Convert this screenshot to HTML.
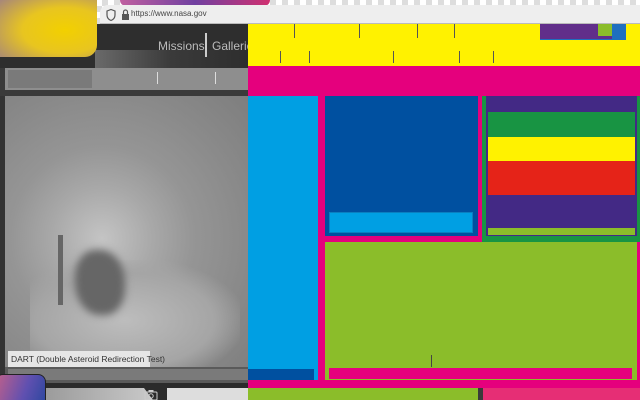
<!DOCTYPE html>
<html><head><meta charset="utf-8"><style>
*{margin:0;padding:0;box-sizing:border-box}
html,body{width:640px;height:400px;overflow:hidden}
body{position:relative;background:#3a3a3a;font-family:"Liberation Sans",sans-serif}
div{position:absolute}
.t{width:1px;background:#555}
</style></head><body>
<div style="left:0;top:0;width:640px;height:24px;background-color:#fff;background-image:linear-gradient(45deg,#ddd 25%,transparent 25%,transparent 75%,#ddd 75%),linear-gradient(45deg,#ddd 25%,transparent 25%,transparent 75%,#ddd 75%);background-size:12px 12px;background-position:0 0,6px 6px"></div>
<div style="left:120px;top:0;width:150px;height:6px;background:linear-gradient(90deg,#c060a0,#7040a0,#d03070);border-radius:0 0 8px 8px"></div>
<div style="left:100px;top:5px;width:540px;height:20px;background:#eee;border-radius:8px 0 0 0;border-bottom:2px solid #bbb"></div>
<svg style="position:absolute;left:104px;top:8px" width="30" height="14"><path d="M3 3 L7 1.5 L11 3 L11 7 Q11 11 7 12.5 Q3 11 3 7Z" fill="none" stroke="#555" stroke-width="1.2"/><rect x="18" y="6" width="7" height="6" fill="#555"/><path d="M19.5 6 V4 a2 2 0 0 1 4 0 V6" fill="none" stroke="#555" stroke-width="1.2"/></svg>
<div style="left:131px;top:9px;font-size:8px;color:#444">https://www.nasa.gov</div>
<div style="left:0;top:24px;width:248px;height:44px;background:#2e2e2e"></div>
<div style="left:95px;top:50px;width:153px;height:18px;background:linear-gradient(90deg,#6a6a6a,#3a3a3a 50%,#2e2e2e)"></div>
<div style="left:158px;top:39px;font-size:12px;color:#bbb">Missions</div>
<div style="left:205px;top:33px;width:2px;height:24px;background:#ccc"></div>
<div style="left:212px;top:39px;font-size:12px;color:#bbb">Galleries</div>
<div style="left:5px;top:68px;width:243px;height:22px;background:#8e8e8e"></div>
<div style="left:8px;top:70px;width:84px;height:18px;background:#7a7a7a"></div>
<div style="left:157px;top:72px;width:1px;height:12px;background:#ddd"></div>
<div style="left:215px;top:72px;width:1px;height:12px;background:#ddd"></div>
<div style="left:0;top:90px;width:248px;height:6px;background:#3a3a3a"></div>
<div style="left:-10px;top:-10px;width:107px;height:67px;border-radius:0 0 12px 0;background:radial-gradient(ellipse at 70% 60%,#f2d000 0%,#e8c520 40%,#a88878 80%,#7a5ab0 100%)"></div>
<div style="left:5px;top:96px;width:243px;height:274px;background:radial-gradient(circle at 40% 52%,#c4c4c4 0%,#a8a8a8 25%,#959595 45%,#8a8a8a 70%,#7e7e7e 100%)"></div>
<div style="left:30px;top:260px;width:210px;height:110px;background:radial-gradient(ellipse at 45% 55%,#bdbdbd,#a5a5a5 55%,transparent 75%)"></div>
<div style="left:75px;top:250px;width:50px;height:65px;background:#666;border-radius:40% 50% 40% 50%;filter:blur(4px)"></div>
<div style="left:58px;top:235px;width:5px;height:70px;background:#666"></div>
<div style="left:8px;top:351px;width:142px;height:16px;background:#e6e6e6"></div>
<div style="left:11px;top:354px;font-size:8.5px;color:#333">DART (Double Asteroid Redirection Test)</div>
<div style="left:0;top:367px;width:248px;height:16px;background:#5a5a5a"></div>
<div style="left:8px;top:369px;width:240px;height:11px;background:#7a7a7a"></div>
<div style="left:0;top:96px;width:5px;height:290px;background:#333"></div>
<div style="left:0;top:383px;width:248px;height:17px;background:#2b2b2b"></div>
<div style="left:40px;top:388px;width:120px;height:12px;background:linear-gradient(90deg,#999,#ccc)"></div>
<div style="left:135px;top:388px;width:30px;height:12px;background:#2b2b2b;clip-path:polygon(30% 0,100% 0,100% 100%,60% 100%)"></div>
<svg style="position:absolute;left:144px;top:389px" width="14" height="11"><rect x="1" y="3" width="12" height="8" rx="1" fill="none" stroke="#ccc"/><circle cx="7" cy="7" r="2.2" fill="none" stroke="#ccc"/><rect x="4.5" y="1" width="5" height="2" fill="#ccc"/></svg>
<div style="left:167px;top:388px;width:81px;height:12px;background:#ddd"></div>
<div style="left:-5px;top:374px;width:51px;height:26px;border-radius:8px 8px 0 0;background:linear-gradient(110deg,#c0608a,#6050b0 60%,#3048a0);border:1px solid #222;border-bottom:none"></div>
<div style="left:248px;top:24px;width:392px;height:43px;background:#fff200"></div>
<div class="t" style="left:294px;top:24px;height:14px"></div>
<div class="t" style="left:359px;top:24px;height:14px"></div>
<div class="t" style="left:417px;top:24px;height:14px"></div>
<div class="t" style="left:454px;top:24px;height:14px"></div>
<div class="t" style="left:280px;top:51px;height:12px"></div>
<div class="t" style="left:309px;top:51px;height:12px"></div>
<div class="t" style="left:393px;top:51px;height:12px"></div>
<div class="t" style="left:459px;top:51px;height:12px"></div>
<div class="t" style="left:493px;top:51px;height:12px"></div>
<div style="left:540px;top:24px;width:86px;height:16px;background:#1f6fbf"></div>
<div style="left:540px;top:24px;width:72px;height:15px;background:#612e8a"></div>
<div style="left:598px;top:24px;width:14px;height:12px;background:#8bbd2a"></div>
<div style="left:248px;top:66px;width:392px;height:322px;background:#e5007d"></div>
<div style="left:248px;top:96px;width:70px;height:284px;background:#009fe3"></div>
<div style="left:248px;top:369px;width:66px;height:11px;background:#0050a0"></div>
<div style="left:325px;top:96px;width:153px;height:140px;background:#0050a0"></div>
<div style="left:329px;top:212px;width:144px;height:21px;background:#009fe3;border:1px solid #0a7fc0"></div>
<div style="left:482px;top:96px;width:158px;height:146px;background:#189443"></div>
<div style="left:486px;top:96px;width:151px;height:140px;background:#432985"></div>
<div style="left:488px;top:112px;width:147px;height:25px;background:#189443"></div>
<div style="left:488px;top:137px;width:147px;height:24px;background:#fff200"></div>
<div style="left:488px;top:161px;width:147px;height:34px;background:#e52318"></div>
<div style="left:488px;top:228px;width:147px;height:7px;background:#8bbd2a"></div>
<div style="left:325px;top:242px;width:312px;height:138px;background:#8bbd2a"></div>
<div style="left:329px;top:368px;width:303px;height:11px;background:#e5007d"></div>
<div style="left:431px;top:355px;width:1px;height:12px;background:#444"></div>
<div style="left:248px;top:388px;width:230px;height:12px;background:#8bbd2a"></div>
<div style="left:483px;top:388px;width:157px;height:12px;background:#e62e75"></div>
</body></html>
